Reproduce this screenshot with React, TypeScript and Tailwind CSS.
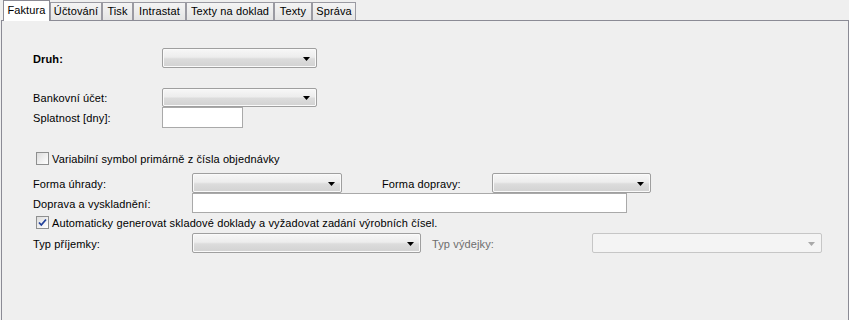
import React from "react";

const tabs = [
  { label: "Faktura", w: 47 },
  { label: "Účtování", w: 52 },
  { label: "Tisk", w: 31 },
  { label: "Intrastat", w: 53 },
  { label: "Texty na doklad", w: 88 },
  { label: "Texty", w: 38 },
  { label: "Správa", w: 44 },
];

function Arrow({ disabled }: { disabled?: boolean }) {
  return (
    <svg width="7" height="4" viewBox="0 0 7 4" className="mt-[1px]">
      <path d="M0 0h7L3.5 4z" fill={disabled ? "#a8a8a8" : "#000"} />
    </svg>
  );
}

function Combo({ w, h = 20, disabled }: { w: number; h?: number; disabled?: boolean }) {
  if (disabled) {
    return (
      <div
        className="flex items-center justify-end pr-[6px] border border-[#c6c6c6] rounded-[2px] bg-[#f4f4f4] shrink-0"
        style={{ width: w, height: h }}
      >
        <Arrow disabled />
      </div>
    );
  }
  return (
    <div
      className="flex items-center justify-end pr-[6px] border border-[#9f9f9f] rounded-[2px] shadow-[inset_0_0_0_1px_#fafafa] bg-[linear-gradient(to_bottom,#f7f7f7_0%,#ededed_45%,#dcdcdc_55%,#d2d2d2_100%)] shrink-0"
      style={{ width: w, height: h }}
    >
      <Arrow />
    </div>
  );
}

function Input({ w, h = 20 }: { w: number; h?: number }) {
  return (
    <div className="bg-white border border-[#a9a9a9] shrink-0" style={{ width: w, height: h }} />
  );
}

function Check({ checked }: { checked?: boolean }) {
  return (
    <div className="w-[13px] h-[13px] border border-[#8e8f8f] bg-[linear-gradient(135deg,#dcdcdc_0%,#f2f2f2_60%,#ffffff_100%)] flex items-center justify-center shrink-0">
      {checked && (
        <svg width="9" height="9" viewBox="0 0 9 9">
          <path d="M1 4.5l2.3 2.5L8 1.5" fill="none" stroke="#21409a" strokeWidth="1.8" />
        </svg>
      )}
    </div>
  );
}

export default function App() {
  return (
    <div className="w-[849px] h-[320px] bg-[#efefef] text-[11px] tracking-[0.12px] text-black font-['Liberation_Sans',Arial,sans-serif] flex flex-col overflow-hidden">
      <div className="h-[21px] flex items-end pl-[3px] relative z-10">
        {tabs.map((t, i) =>
          i === 0 ? (
            <div
              key={t.label}
              className="h-[21px] bg-white border border-b-0 border-[#8b8b95] flex items-center justify-center pb-[1px]"
              style={{ width: t.w }}
            >
              {t.label}
            </div>
          ) : (
            <div
              key={t.label}
              className="h-[18px] mb-[1px] bg-[linear-gradient(to_bottom,#f4f4f4,#e4e4e4)] border border-b-0 border-[#9a9aa2] flex items-center justify-center"
              style={{ width: t.w }}
            >
              {t.label}
            </div>
          )
        )}
      </div>
      <div className="ml-[1px] h-[300px] -mt-[1px] border border-[#8b8b95] border-b-0 bg-[#efefef] flex flex-col pl-[31px]">
        <div className="mt-[27px] h-[20px] flex items-center">
          <div className="w-[129px] pt-[2px] font-bold">Druh:</div>
          <Combo w={155} />
        </div>
        <div className="mt-[20px] h-[19px] flex items-center">
          <div className="w-[129px] pt-[2px]">Bankovní účet:</div>
          <Combo w={155} h={19} />
        </div>
        <div className="h-[21px] flex items-center">
          <div className="w-[129px] pt-[1px]">Splatnost [dny]:</div>
          <Input w={81} h={21} />
        </div>
        <div className="mt-[24px] h-[13px] flex items-center gap-[3px] pl-[3px]">
          <Check />
          <span className="pt-[1px]">Variabilní symbol primárně z čísla objednávky</span>
        </div>
        <div className="mt-[8px] h-[20px] flex items-center">
          <div className="w-[159px] pt-[2px]">Forma úhrady:</div>
          <Combo w={150} />
          <div className="ml-[40px] w-[110px] pt-[2px]">Forma dopravy:</div>
          <Combo w={159} />
        </div>
        <div className="h-[20px] flex items-center">
          <div className="w-[159px] pt-[2px]">Doprava a vyskladnění:</div>
          <Input w={435} />
        </div>
        <div className="mt-[3px] h-[13px] flex items-center gap-[3px] pl-[3px]">
          <Check checked />
          <span className="pt-[1px]">Automaticky generovat skladové doklady a vyžadovat zadání výrobních čísel.</span>
        </div>
        <div className="mt-[4px] h-[20px] flex items-center">
          <div className="w-[159px] pt-[2px]">Typ příjemky:</div>
          <Combo w={229} />
          <div className="ml-[11px] w-[160px] pt-[2px] text-[#6d6d6d]">Typ výdejky:</div>
          <Combo w={230} disabled />
        </div>
      </div>
    </div>
  );
}
